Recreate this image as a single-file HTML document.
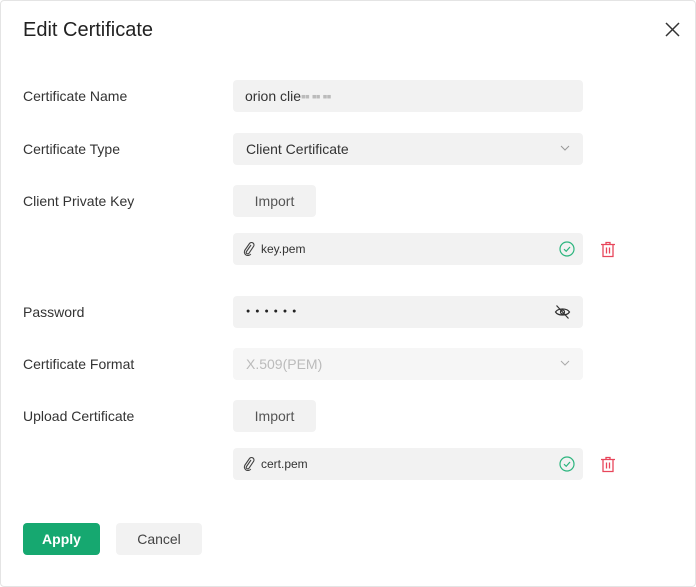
<!DOCTYPE html>
<html><head><style>
*{box-sizing:border-box;margin:0;padding:0}
body{width:696px;height:587px;background:#fff;font-family:"Liberation Sans",sans-serif;position:relative;overflow:hidden}
.a{position:absolute}
.lbl{position:absolute;left:23px;font-size:14px;color:#333}
.f{position:absolute;left:233px;width:350px;height:32px;background:#f2f2f2;border-radius:4px;font-size:14px;color:#333;line-height:32px;padding-left:13px}
.btn{position:absolute;left:233px;width:83px;height:32px;background:#f2f2f2;border-radius:4px;font-size:14px;color:#555;line-height:32px;text-align:center}
.file{font-size:12px;padding-left:28px}
</style></head><body>
<div class="a" style="left:0;top:0;width:696px;height:587px;border:1px solid #e4e4e4;border-radius:4px"></div>
<div class="a" style="left:23px;top:19px;font-size:20px;color:#222">Edit Certificate</div>
<svg class="a" style="left:665px;top:22px" width="15" height="15" viewBox="0 0 15 15"><path d="M1 1L14 14M14 1L1 14" stroke="#333" stroke-width="1.5"/></svg>

<div class="lbl" style="top:88px">Certificate Name</div>
<div class="f" style="top:80px;padding-left:12px">orion clie<span style="color:#bbb;letter-spacing:-1px">▪▪ ▪▪ ▪▪</span></div>

<div class="lbl" style="top:141px">Certificate Type</div>
<div class="f" style="top:133px">Client Certificate</div>
<svg class="a" style="left:560px;top:145px" width="10" height="7"><path d="M1 1L5 5L9 1" fill="none" stroke="#999"/></svg>

<div class="lbl" style="top:193px">Client Private Key</div>
<div class="btn" style="top:185px">Import</div>
<div class="f file" style="top:233px">key.pem</div>
<svg class="a" style="left:243px;top:242px" width="12" height="14" viewBox="0 0 12 14"><path d="M8 3L3.5 9.5a1.5 1.5 0 0 0 2.5 1.7L10.5 4.5a2.5 2.5 0 0 0-4-3L2 8a3.5 3.5 0 0 0 5.8 4" fill="none" stroke="#444" stroke-width="1.1"/></svg>
<svg class="a" style="left:559px;top:241px" width="16" height="16"><circle cx="8" cy="8" r="7" fill="none" stroke="#2cb57e" stroke-width="1.2"/><path d="M5 8.2L7.2 10.3L11 6" fill="none" stroke="#2cb57e" stroke-width="1.2"/></svg>
<svg class="a" style="left:600px;top:241px" width="16" height="17"><path d="M1 3.5H15M6 3.5V1.5H10V3.5M3 3.5V15.5H13V3.5M6.5 6.5V12.5M9.5 6.5V12.5" fill="none" stroke="#e8465b" stroke-width="1.3"/></svg>

<div class="lbl" style="top:304px">Password</div>
<div class="f" style="top:296px;font-size:7px;letter-spacing:5px;color:#222">●●●●●●</div>
<svg class="a" style="left:554px;top:304px" width="17" height="16" viewBox="0 0 17 16"><path d="M1.5 8C4 4 13 4 15.5 8C13 12 4 12 1.5 8Z" fill="none" stroke="#333" stroke-width="1.2"/><circle cx="8.5" cy="8" r="2" fill="none" stroke="#333" stroke-width="1.2"/><path d="M2.5 1.5L14.5 14.5" stroke="#333" stroke-width="1.2"/></svg>

<div class="lbl" style="top:356px">Certificate Format</div>
<div class="f" style="top:348px;background:#f6f6f6;color:#bbb">X.509(PEM)</div>
<svg class="a" style="left:560px;top:360px" width="10" height="7"><path d="M1 1L5 5L9 1" fill="none" stroke="#aaa"/></svg>

<div class="lbl" style="top:408px">Upload Certificate</div>
<div class="btn" style="top:400px">Import</div>
<div class="f file" style="top:448px">cert.pem</div>
<svg class="a" style="left:243px;top:457px" width="12" height="14" viewBox="0 0 12 14"><path d="M8 3L3.5 9.5a1.5 1.5 0 0 0 2.5 1.7L10.5 4.5a2.5 2.5 0 0 0-4-3L2 8a3.5 3.5 0 0 0 5.8 4" fill="none" stroke="#444" stroke-width="1.1"/></svg>
<svg class="a" style="left:559px;top:456px" width="16" height="16"><circle cx="8" cy="8" r="7" fill="none" stroke="#2cb57e" stroke-width="1.2"/><path d="M5 8.2L7.2 10.3L11 6" fill="none" stroke="#2cb57e" stroke-width="1.2"/></svg>
<svg class="a" style="left:600px;top:456px" width="16" height="17"><path d="M1 3.5H15M6 3.5V1.5H10V3.5M3 3.5V15.5H13V3.5M6.5 6.5V12.5M9.5 6.5V12.5" fill="none" stroke="#e8465b" stroke-width="1.3"/></svg>

<div class="a" style="left:23px;top:523px;width:77px;height:32px;background:#16a870;border-radius:4px;color:#fff;font-size:14px;font-weight:bold;line-height:32px;text-align:center">Apply</div>
<div class="a" style="left:116px;top:523px;width:86px;height:32px;background:#f2f2f2;border-radius:4px;color:#444;font-size:14px;line-height:32px;text-align:center">Cancel</div>
</body></html>
